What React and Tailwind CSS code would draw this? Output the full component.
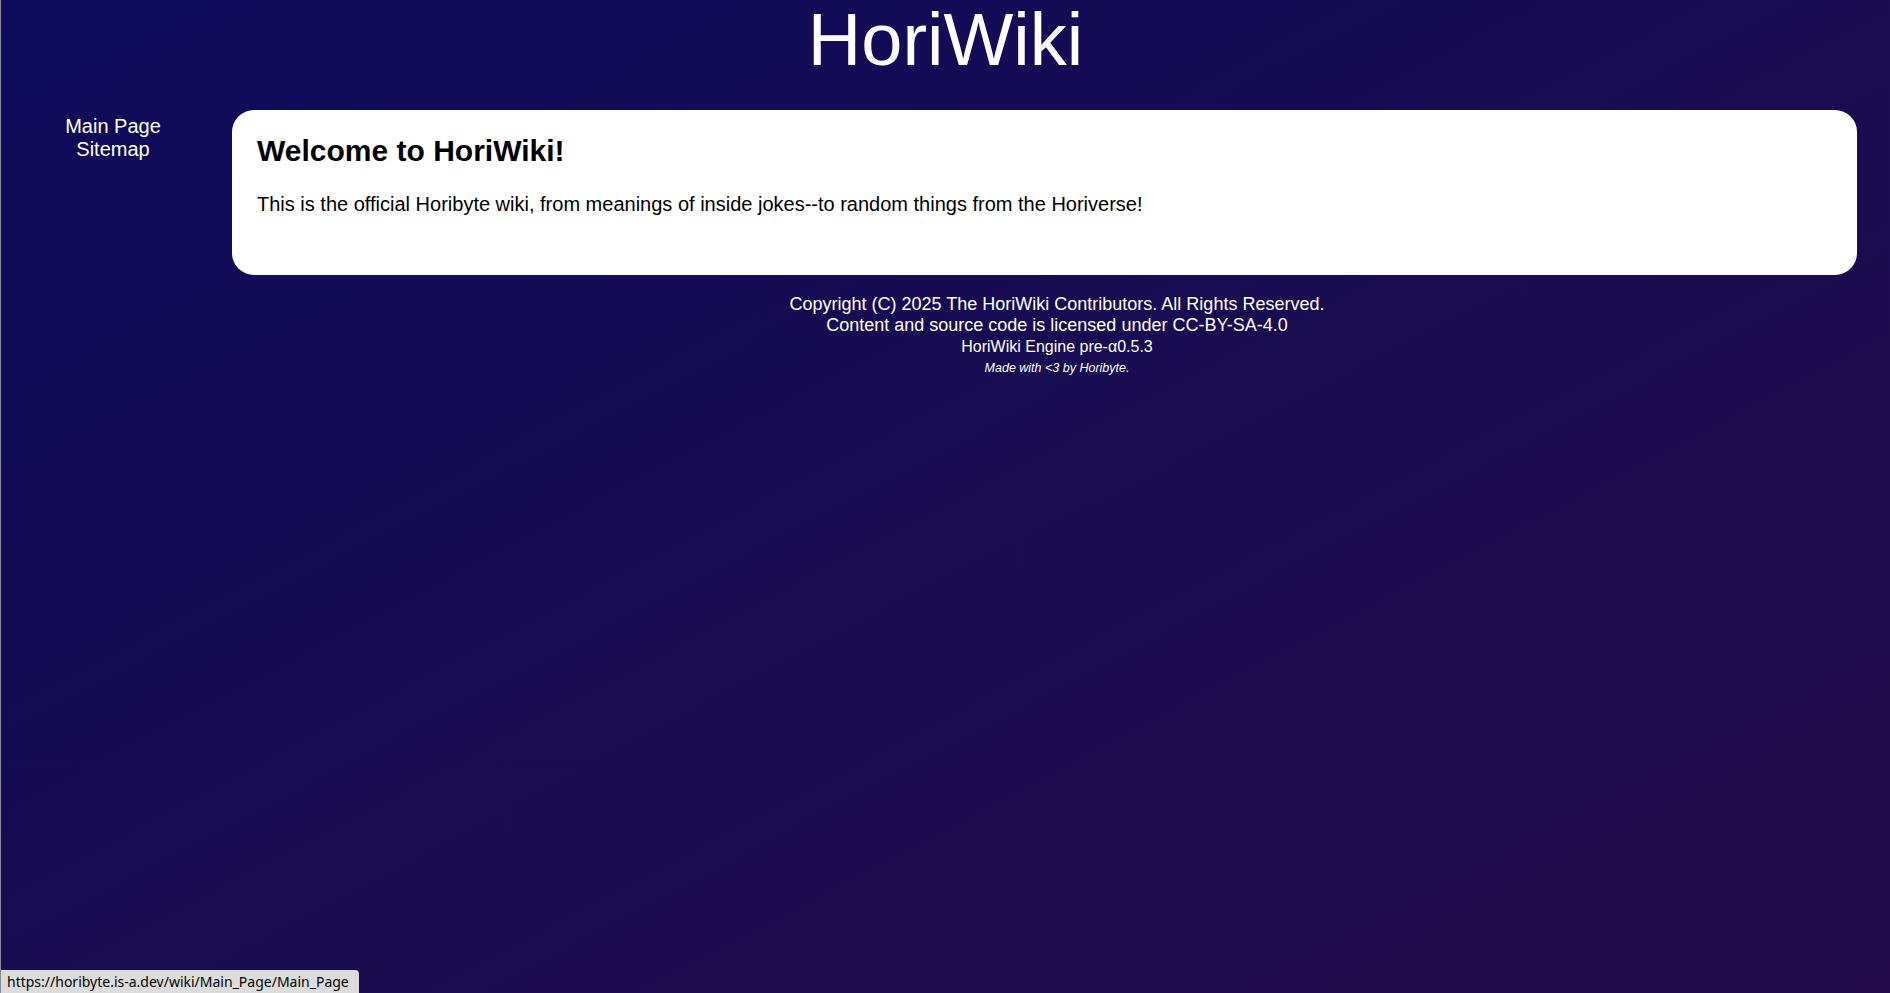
export default function App() {
    return (
        <div className="relative min-h-screen w-full border-l border-[#8a8a9a] bg-gradient-to-br from-[#0d0b5b] to-[#210a47] text-white font-['Liberation_Sans',Arial,sans-serif]">

            {/*Header*/}
            <h1 className="text-center text-[74px] leading-[80px] font-normal">HoriWiki</h1>

            <div className="flex mt-[30px]">

                {/*Sidebar*/}
                <nav className="w-[224px] shrink-0 pt-[5px] flex flex-col items-center text-[20px] leading-[23px]">
                    <a href="#" className="text-white">Main Page</a>
                    <a href="#" className="text-white">Sitemap</a>
                </nav>

                {/*Content*/}
                <div className="flex-1 ml-[7px]">
                    <div className="mr-[33px] h-[165px] rounded-[22px] bg-white text-black px-[25px] pt-[24px]">
                        <h2 className="text-[30px] leading-[34.5px] font-bold">Welcome to HoriWiki!</h2>
                        <p className="mt-[24px] text-[20px] leading-[23px]">
                            This is the official Horibyte wiki, from meanings of inside jokes--to random things from the Horiverse!
                        </p>
                    </div>

                    <footer className="mt-[19px] pr-[8px] flex flex-col items-center text-center">
                        <p className="text-[18px] leading-[20.7px]">Copyright (C) 2025 The HoriWiki Contributors. All Rights Reserved.</p>
                        <p className="text-[18px] leading-[20.7px]">Content and source code is licensed under CC-BY-SA-4.0</p>
                        <p className="mt-[3px] text-[16px] leading-[18.4px]">HoriWiki Engine pre-α0.5.3</p>
                        <p className="mt-[4px] text-[12.5px] leading-[14.4px] italic">Made with &lt;3 by Horibyte.</p>
                    </footer>
                </div>
            </div>

            {/*Link preview*/}
            <div className="absolute left-0 bottom-0 h-[23px] w-[358px] rounded-tr-[4px] bg-[#dcdcdc] pl-[6px] text-[14px] leading-[24px] text-black font-['Noto_Sans',sans-serif]">
                https://horibyte.is-a.dev/wiki/Main_Page/Main_Page
            </div>
        </div>
    );
}
